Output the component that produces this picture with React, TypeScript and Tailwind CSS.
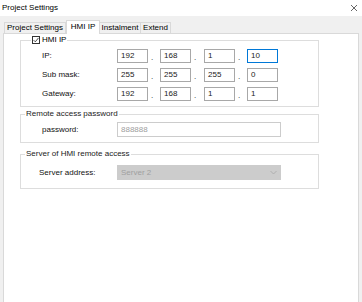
import React from 'react';

const tabs = [
  { label: 'Project Settings', w: 'w-[62px]' },
  { label: 'HMI IP', w: 'w-[34px]', active: true },
  { label: 'Instalment', w: 'w-[42px]' },
  { label: 'Extend', w: 'w-[31px]' },
];

const ipRows = [
  { label: 'IP:', parts: ['192', '168', '1', '10'], focus: 3 },
  { label: 'Sub mask:', parts: ['255', '255', '255', '0'] },
  { label: 'Gateway:', parts: ['192', '168', '1', '1'] },
];

const dotWidths = ['w-[12px]', 'w-[13px]', 'w-[12px]'];

const IpRow: React.FC<{ label: string; parts: string[]; focus?: number }> = ({ label, parts, focus }) => (
  <div className="flex items-center h-[14px]">
    <span className="w-[75px] text-[#111]">{label}</span>
    {parts.map((p, i) => (
      <React.Fragment key={i}>
        <div
          className={`w-[31px] h-[14px] border bg-white pl-[3px] leading-[12px] text-[#1a1a1a] ${
            i === focus ? 'border-[#0078d7]' : 'border-[#a8a8a8]'
          }`}
        >
          {p}
        </div>
        {i < 3 && (
          <div className={`${dotWidths[i]} h-[14px] flex items-end pl-[3px] leading-[10px] text-[#222]`}>.</div>
        )}
      </React.Fragment>
    ))}
  </div>
);

export default function App() {
  return (
    <div className="w-[362px] h-[302px] bg-[#f0f0f0] flex flex-col overflow-hidden text-[8px] text-black font-['Liberation_Sans',Arial,sans-serif]">
      {/* title bar */}
      <div className="h-[16px] bg-white flex items-center justify-between pl-[2px] pr-[4px] shrink-0">
        <span className="leading-[10px]">Project Settings</span>
        <svg width="8" height="8" viewBox="0 0 8 8" className="text-[#555]">
          <path d="M1 1L7 7M7 1L1 7" stroke="currentColor" strokeWidth="0.9" fill="none" />
        </svg>
      </div>

      {/* tab strip */}
      <div className="h-[17px] flex items-end pl-[4px] shrink-0">
        {tabs.map((t) =>
          t.active ? (
            <div
              key={t.label}
              className={`${t.w} h-[14px] -mb-px relative z-10 bg-white border border-b-0 border-[#d9d9d9] flex items-center justify-center leading-[10px] pb-[1px]`}
            >
              {t.label}
            </div>
          ) : (
            <div
              key={t.label}
              className={`${t.w} h-[11px] bg-[#f0f0f0] border border-b-0 border-[#d9d9d9] -ml-px first:ml-0 flex items-center justify-center leading-[10px]`}
            >
              {t.label}
            </div>
          )
        )}
      </div>

      {/* panel */}
      <div className="flex-1 mx-[3px] bg-white border border-b-0 border-[#d9d9d9]">
        {/* HMI IP group */}
        <fieldset className="mt-[1px] ml-[16px] w-[299px] border border-[#dddddd]">
          <legend className="ml-[10px] px-[1px] h-[10px] flex items-center gap-[2px] leading-[10px]">
            <span className="w-[8px] h-[8px] border border-[#333] bg-white flex items-center justify-center">
              <svg width="6" height="6" viewBox="0 0 6 6">
                <path d="M0.6 3.1L2.3 4.8L5.5 0.9" stroke="#222" strokeWidth="0.8" fill="none" />
              </svg>
            </span>
            <span>HMI IP</span>
          </legend>
          <div className="flex flex-col gap-[5px] pl-[21px] pt-[4px] pb-[5px]">
            {ipRows.map((r) => (
              <IpRow key={r.label} {...r} />
            ))}
          </div>
        </fieldset>

        {/* Remote access password */}
        <fieldset className="mt-[2px] ml-[16px] w-[299px] border border-[#dddddd]">
          <legend className="ml-[4px] px-[1px] h-[10px] leading-[10px] text-[#222]">Remote access password</legend>
          <div className="flex items-center pl-[21px] pt-[3px] pb-[5px]">
            <span className="w-[75px] text-[#111]">password:</span>
            <div className="w-[164px] h-[15px] border border-[#cccccc] pl-[3px] leading-[13px] text-[#a0a0a0]">888888</div>
          </div>
        </fieldset>

        {/* Server of HMI remote access */}
        <fieldset className="mt-[6px] ml-[16px] w-[299px] border border-[#dddddd]">
          <legend className="ml-[4px] px-[1px] h-[10px] leading-[10px] text-[#222]">Server of HMI remote access</legend>
          <div className="flex items-center pl-[18px] pt-[6px] pb-[8px]">
            <span className="w-[78px] text-[#111]">Server address:</span>
            <div className="w-[164px] h-[15px] bg-[#cccccc] flex items-center justify-between pl-[4px] pr-[4px] text-[#a0a0a0]">
              <span className="leading-[13px]">Server 2</span>
              <svg width="7" height="5" viewBox="0 0 7 5">
                <path d="M0.5 1L3.5 4L6.5 1" stroke="#a8a8a8" strokeWidth="0.8" fill="none" />
              </svg>
            </div>
          </div>
        </fieldset>
      </div>
    </div>
  );
}
